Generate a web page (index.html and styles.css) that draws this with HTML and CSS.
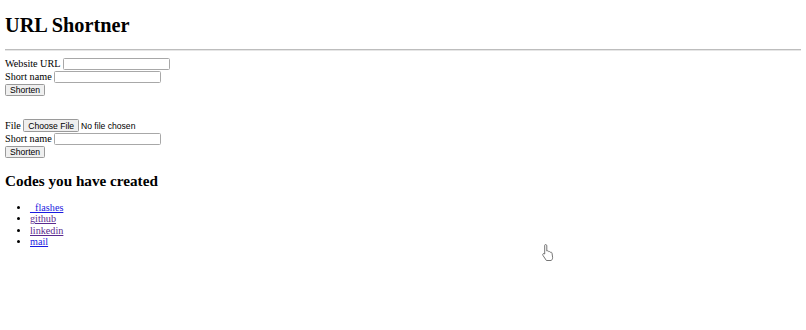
FILE: index.html
```html
<!DOCTYPE html>
<html>
<head>
<meta charset="utf-8">
<title>URL Shortner</title>
<link rel="stylesheet" href="styles.css">
</head>
<body>
<h1 class="title">URL Shortner</h1>
<hr class="rule">
<form class="form">
  <div class="row"><label>Website URL</label><input class="text" type="url"></div>
  <div class="row"><label>Short name</label><input class="text" type="text"></div>
  <div class="row"><button class="btn" type="button">Shorten</button></div>
</form>
<form class="form form-file">
  <div class="row"><label>File</label><button class="btn btn-file" type="button">Choose File</button><span class="file-note">No file chosen</span></div>
  <div class="row"><label>Short name</label><input class="text" type="text"></div>
  <div class="row"><button class="btn" type="button">Shorten</button></div>
</form>
<h2 class="sub">Codes you have created</h2>
<ul class="list">
  <li><a class="link" href="#">_flashes</a></li>
  <li><a class="link visited" href="#">github</a></li>
  <li><a class="link visited" href="#">linkedin</a></li>
  <li><a class="link" href="#">mail</a></li>
</ul>
<svg class="cursor" width="14" height="18" viewBox="0 0 14 18"><path d="M4.5 1.5c.8 0 1.3.6 1.3 1.3v5.2l.3-.1c.7-.3 1.4 0 1.6.6l.1.2c.7-.3 1.4 0 1.6.6.7-.3 1.5.1 1.6.8l.6 4.2c.1 1.3-.4 2.5-1.4 3.2H5.4L2 12.5c-.5-.6-.4-1.4.2-1.8.5-.3 1.2-.2 1.5.3V2.8c0-.7.1-1.3.8-1.3z" fill="#fff" stroke="#666" stroke-width="0.9"/></svg>
</body>
</html>
```
FILE: styles.css
```css
html { background: #fff; }
body {
  margin: 0;
  padding: 0 5px 5px;
  font-family: "Liberation Serif", "Times New Roman", serif;
  font-size: 10.2px;
  color: #000;
}
.title {
  font-size: 20.3px;
  line-height: 23px;
  font-weight: bold;
  margin: 0;
  padding-top: 13.5px;
  margin-bottom: 12px;
}
.rule {
  border: none;
  border-top: 1px solid #bdbdbd;
  border-bottom: 1px solid #e6e6e6;
  height: 0;
  margin: 0 0 6.5px;
}
.form {
  display: flex;
  flex-direction: column;
  margin: 0;
}
.form-file { margin-top: 22px; }
.row {
  display: flex;
  align-items: center;
  gap: 2.2px;
  height: 13.33px;
  white-space: nowrap;
}
.text {
  box-sizing: border-box;
  width: 107px;
  height: 12.3px;
  padding: 0 2px;
  border: 1px solid #a8a8a8;
  border-radius: 1.5px;
  font-size: 8.6px;
  margin: 0;
  background: #fff;
}
.btn {
  box-sizing: border-box;
  height: 12px;
  font-family: "Liberation Sans", Arial, sans-serif;
  font-size: 8.6px;
  line-height: 10px;
  padding: 0 4px;
  margin: 0;
  border: 1px solid #9a9a9a;
  border-radius: 1.5px;
  background: #efefef;
  color: #000;
}
.btn-file { height: 12.7px; padding: 0 4.2px; }
.file-note {
  font-family: "Liberation Sans", Arial, sans-serif;
  font-size: 8.6px;
  margin-left: -0.5px;
}
.sub {
  font-size: 15.2px;
  line-height: 17.5px;
  font-weight: bold;
  margin: 13px 0 12.2px;
}
.list {
  margin: 0;
  padding-left: 25px;
  line-height: 11.5px;
}
.link { color: #1a1ae0; }
.link.visited { color: #5a2a8e; }
.cursor {
  position: absolute;
  left: 541px;
  top: 243px;
}
```
